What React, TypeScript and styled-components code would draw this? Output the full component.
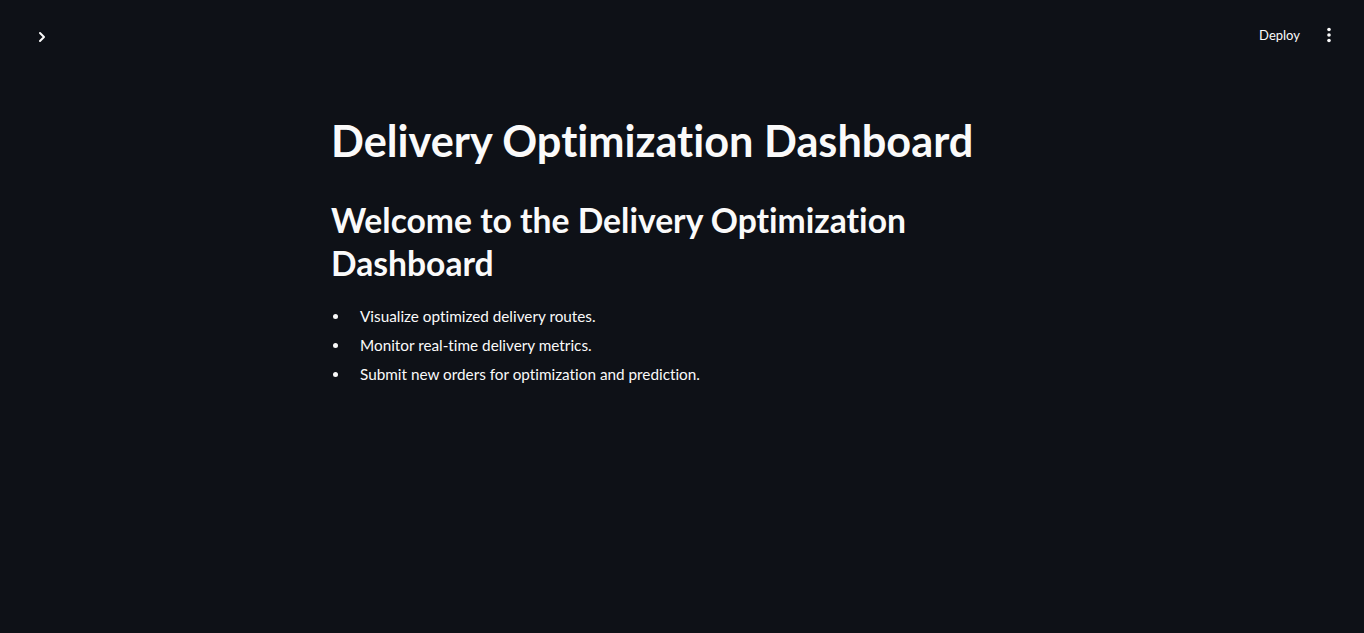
import React from "react";
import styled, { createGlobalStyle } from "styled-components";

const Global = createGlobalStyle`
  html, body { margin: 0; padding: 0; background: #0e1117; }
  body {
    font-family: "Lato", "Liberation Sans", sans-serif;
    color: #fafafa;
    font-variant-ligatures: none;
  }
  * { box-sizing: border-box; }
`;

const Page = styled.div`
  min-height: 633px;
  background: #0e1117;
  display: flex;
  flex-direction: column;
`;

const Header = styled.header`
  height: 60px;
  display: flex;
  align-items: center;
  justify-content: space-between;
  padding: 10px 29px 0 32px;
`;

const IconButton = styled.button<{ $w?: number; $dy?: number }>`
  background: none;
  border: none;
  color: #fafafa;
  padding: 0;
  display: flex;
  align-items: center;
  justify-content: center;
  width: ${(p) => p.$w ?? 20}px;
  height: 20px;
  margin-top: ${(p) => p.$dy ?? 0}px;
  cursor: pointer;
`;

const Right = styled.div`
  display: flex;
  align-items: center;
  gap: 19px;
`;

const DeployButton = styled.button`
  background: none;
  border: none;
  color: #fafafa;
  font-family: inherit;
  font-size: 13px;
  padding: 4px 4px;
  cursor: pointer;
`;

const Main = styled.main`
  width: 704px;
  margin: 0 auto;
  padding-top: 44px;
  padding-left: 1px;
`;

const Title = styled.h1`
  font-size: 43.3px;
  font-weight: 700;
  margin: 0;
  line-height: 52px;
  padding: 10px 0 16px;
`;

const Subtitle = styled.h2`
  font-size: 33.65px;
  font-weight: 700;
  margin: 0;
  line-height: 43px;
  padding: 17px 0 19px;
`;

const List = styled.ul`
  margin: 0;
  padding: 0;
  list-style: none;
  font-size: 15.3px;
`;

const Item = styled.li`
  display: flex;
  align-items: center;
  line-height: 25px;
  margin-bottom: 4px;
`;

const Bullet = styled.span`
  width: 5px;
  height: 5px;
  border-radius: 50%;
  background: #fafafa;
  margin: 0 22px 0 2px;
  flex-shrink: 0;
`;

export default function App() {
  const items = [
    "Visualize optimized delivery routes.",
    "Monitor real-time delivery metrics.",
    "Submit new orders for optimization and prediction.",
  ];
  return (
    <Page>
      <Global />
      <Header>
        <IconButton aria-label="expand" $dy={4}>
          <svg width="16" height="16" viewBox="0 0 24 24" fill="none" stroke="#fafafa" strokeWidth="3" strokeLinecap="round" strokeLinejoin="round">
            <path d="M9 6l6 6-6 6" />
          </svg>
        </IconButton>
        <Right>
          <DeployButton>Deploy</DeployButton>
          <IconButton $w={12} aria-label="menu">
            <svg width="4" height="16" viewBox="0 0 4 16" fill="#fafafa">
              <circle cx="2" cy="2.5" r="1.8" />
              <circle cx="2" cy="8" r="1.8" />
              <circle cx="2" cy="13.5" r="1.8" />
            </svg>
          </IconButton>
        </Right>
      </Header>
      <Main>
        <Title>Delivery Optimization Dashboard</Title>
        <Subtitle>Welcome to the Delivery Optimization Dashboard</Subtitle>
        <List>
          {items.map((t) => (
            <Item key={t}>
              <Bullet />
              {t}
            </Item>
          ))}
        </List>
      </Main>
    </Page>
  );
}
